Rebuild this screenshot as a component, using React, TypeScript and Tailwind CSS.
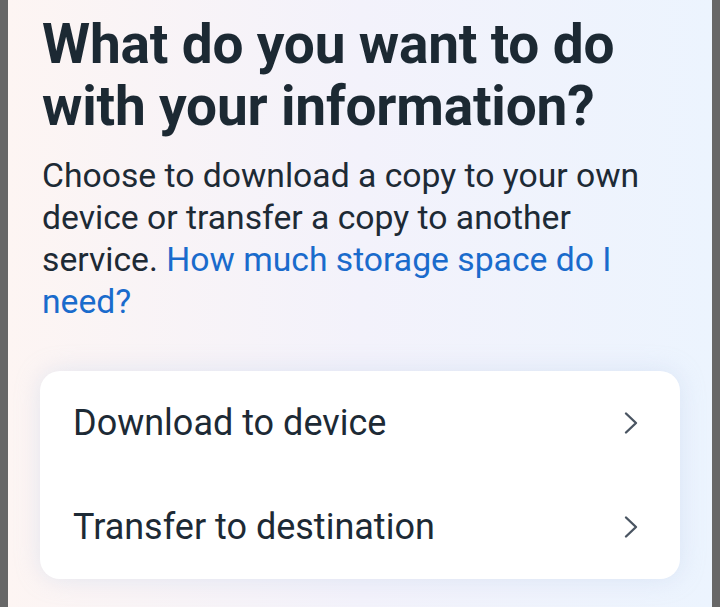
import React from "react";

interface OptionRowProps {
    label: string
}

const Chevron: React.FC = () => (
    <svg width="16" height="24" viewBox="0 0 16 24" fill="none" className="shrink-0">
        <path d="M3 2.5 L13 12 L3 21.5" stroke="#4a5562" strokeWidth="2.4" strokeLinecap="round" strokeLinejoin="round"/>
    </svg>
);

const OptionRow: React.FC<OptionRowProps> = ({label}) => (
    <div className="flex items-center justify-between h-[104px] pl-[33px] pr-[41px] cursor-pointer">
        <span className="text-[36px] leading-none text-[#1d2a35]">{label}</span>
        <Chevron/>
    </div>
);

const App: React.FC = () => {
    return (
        <div className="flex w-[720px] h-[607px] overflow-hidden bg-[#676767] font-['Roboto','Liberation_Sans',sans-serif]">
            <div className="w-[8px] shrink-0"></div>
            <div className="flex-1 flex flex-col px-[32px] bg-gradient-to-r from-[#fdf5f3] via-[#f3f2fb] to-[#ecf4fe]">
                <h1 className="mt-[13px] pl-[2px] text-[55px] leading-[62px] font-bold text-[#1c2933] tracking-[-0.2px]">
                    What do you want to do with your information?
                </h1>
                <p className="mt-[18px] pl-[2px] text-[33.7px] leading-[42px] text-[#1d2a35]">
                    Choose to download a copy to your own device or transfer a copy to another service.{" "}
                    <a className="text-[#1a6bcc]">How much storage space do I need?</a>
                </p>
                <div className="mt-[48px] bg-white rounded-[20px] shadow-[0_0_24px_rgba(180,200,230,0.35)]">
                    <OptionRow label="Download to device"/>
                    <OptionRow label="Transfer to destination"/>
                </div>
            </div>
            <div className="w-[8px] shrink-0"></div>
        </div>
    );
}
export default App;
